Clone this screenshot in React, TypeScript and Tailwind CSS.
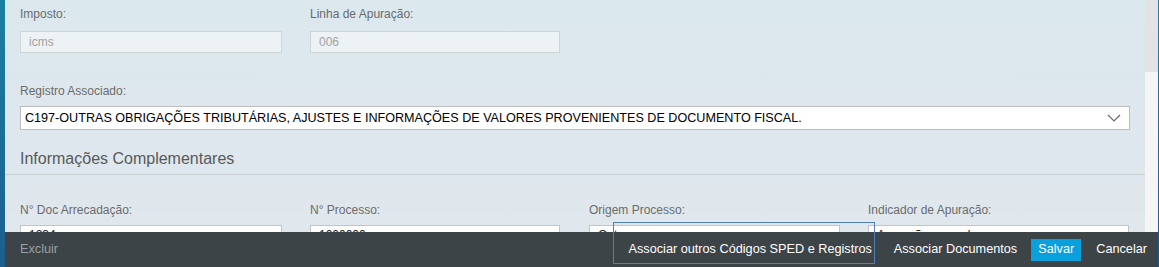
import React from 'react';

const font = { fontFamily: '"Liberation Sans", Arial, sans-serif' };

const Label: React.FC<{ children: React.ReactNode; gap?: string }> = ({ children, gap = 'mb-[10px]' }) => (
  <div className={`text-[12px] leading-[14px] text-[#6b6b6b] ${gap}`}>{children}</div>
);

const ReadOnlyInput: React.FC<{ value: string; width: string }> = ({ value, width }) => (
  <div className={`${width} h-[22px] border border-[#cdd5d9] bg-[#edf2f4] px-[8px] text-[12px] leading-[20px] text-[#a2a2a2]`}>
    {value}
  </div>
);

const TextInput: React.FC<{ value: string; width: string }> = ({ value, width }) => (
  <div className={`${width} h-[23px] border border-[#c4c4c4] bg-white px-[8px] pt-[2px] text-[12px] leading-[14px] text-[#222]`}>
    {value}
  </div>
);

const Chevron = () => (
  <svg width="14" height="8" viewBox="0 0 14 8" fill="none" className="text-[#6b6b6b]">
    <path d="M1 1l6 6 6-6" stroke="currentColor" strokeWidth="1.2" />
  </svg>
);

const App: React.FC = () => {
  return (
    <div style={font} className="flex h-[267px] w-[1159px] overflow-hidden">
      <div className="w-[5px] bg-gradient-to-b from-[#1b80a0] to-[#1c5e92]" />
      <div className="flex flex-1 flex-col">
        <div className="flex flex-1 overflow-hidden">
          <div className="flex-1 bg-gradient-to-b from-[#dbe8ee] to-[#e0e7ed]">
            <div className="px-[15px] pt-[7px]">
              <div className="grid grid-cols-[290px_279px]">
                <div>
                  <Label>Imposto:</Label>
                  <ReadOnlyInput value="icms" width="w-[262px]" />
                </div>
                <div>
                  <Label>Linha de Apuração:</Label>
                  <ReadOnlyInput value="006" width="w-[250px]" />
                </div>
              </div>

              <div className="mt-[31px]">
                <Label gap="mb-[8px]">Registro Associado:</Label>
                <div className="flex h-[24px] w-[1110px] items-center justify-between border border-[#bdbdbd] bg-white pl-[4px] pr-[8px] text-[12.6px] text-black">
                  <span>C197-OUTRAS OBRIGAÇÕES TRIBUTÁRIAS, AJUSTES E INFORMAÇÕES DE VALORES PROVENIENTES DE DOCUMENTO FISCAL.</span>
                  <Chevron />
                </div>
              </div>
            </div>

            <div className="mt-[19px] border-b border-[#c9d0d4] px-[15px] pb-[5px] text-[16px] leading-[20px] text-[#595959]">
              Informações Complementares
            </div>

            <div className="grid grid-cols-[290px_279px_279px_261px] px-[15px] pt-[28px]">
              <div>
                <Label gap="mb-[8px]">N° Doc Arrecadação:</Label>
                <TextInput value="1234" width="w-[262px]" />
              </div>
              <div>
                <Label gap="mb-[8px]">N° Processo:</Label>
                <TextInput value="1000000" width="w-[250px]" />
              </div>
              <div>
                <Label gap="mb-[8px]">Origem Processo:</Label>
                <TextInput value="Outros" width="w-[251px]" />
              </div>
              <div>
                <Label gap="mb-[8px]">Indicador de Apuração:</Label>
                <TextInput value="Apuração mensal" width="w-[261px]" />
              </div>
            </div>
          </div>
          <div className="flex w-[13px] flex-col bg-[#f5f5f5]">
            <div className="h-[72px] bg-[#e3e3e3]" />
          </div>
        </div>

        <div className="flex h-[35px] items-center bg-[#3d4447] pl-[15px] pr-[11px] text-[12.7px]">
          <button className="text-[#9aa1a4]">Excluir</button>
          <div className="ml-auto flex items-center">
            <button className="relative pl-[16px] pr-[3px] text-white">
              Associar outros Códigos SPED e Registros
              <span className="pointer-events-none absolute left-0 right-0 top-[-18px] h-[42px] border border-[#4f80b8]" />
            </button>
            <button className="pl-[19px] pr-[14px] text-white">Associar Documentos</button>
            <button className="h-[22px] w-[50px] bg-[#0a9fdd] text-white">Salvar</button>
            <button className="pl-[15px] text-white">Cancelar</button>
          </div>
        </div>
      </div>
      <div className="w-[1px] bg-gradient-to-b from-[#1b80a0] to-[#1c5e92]" />
    </div>
  );
};

export default App;
